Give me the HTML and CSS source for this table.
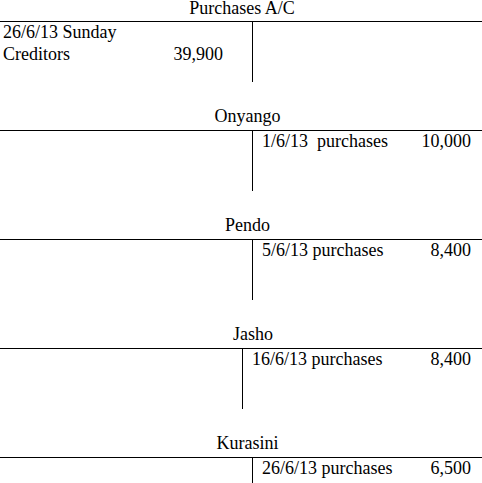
FILE: index.html
```html
<!DOCTYPE html>
<html lang="en">
<head>
<meta charset="utf-8">
<title>Ledger accounts</title>
<link rel="stylesheet" href="styles.css">
</head>
<body>
<section class="acct acct-first">
  <h2 class="acct-title title-main">Purchases A/C</h2>
  <div class="ledger">
    <div class="side side-dr">
      <div class="row">26/6/13 Sunday</div>
      <div class="row"><span>Creditors</span><span class="amt">39,900</span></div>
    </div>
    <div class="side side-cr"></div>
  </div>
</section>

<section class="acct">
  <h2 class="acct-title title-shift">Onyango</h2>
  <div class="ledger">
    <div class="side side-dr"></div>
    <div class="side side-cr">
      <div class="row"><span class="pre">1/6/13  purchases</span><span class="amt">10,000</span></div>
    </div>
  </div>
</section>

<section class="acct">
  <h2 class="acct-title title-shift">Pendo</h2>
  <div class="ledger">
    <div class="side side-dr"></div>
    <div class="side side-cr">
      <div class="row"><span>5/6/13 purchases</span><span class="amt">8,400</span></div>
    </div>
  </div>
</section>

<section class="acct">
  <h2 class="acct-title title-wide">Jasho</h2>
  <div class="ledger ledger-narrow">
    <div class="side side-dr"></div>
    <div class="side side-cr">
      <div class="row"><span>16/6/13 purchases</span><span class="amt">8,400</span></div>
    </div>
  </div>
</section>

<section class="acct">
  <h2 class="acct-title title-shift">Kurasini</h2>
  <div class="ledger">
    <div class="side side-dr"></div>
    <div class="side side-cr">
      <div class="row"><span>26/6/13 purchases</span><span class="amt">6,500</span></div>
    </div>
  </div>
</section>
</body>
</html>
```

FILE: styles.css
```css
html, body {
  margin: 0;
  padding: 0;
  background: #ffffff;
}

body {
  font-family: "Liberation Serif", "Times New Roman", serif;
  font-size: 18px;
  color: #000000;
  overflow: hidden;
}

.acct {
  margin-bottom: 26px;
}

.acct-title {
  margin: 0 0 6px;
  font-size: 18px;
  font-weight: normal;
  line-height: 16px;
  text-align: center;
}

.acct-first .acct-title {
  margin-bottom: 5px;
}

.title-main {
  padding-left: 2px;
}

.title-shift {
  padding-left: 13px;
}

.title-wide {
  padding-left: 24px;
}

.ledger {
  display: grid;
  grid-template-columns: 252px 1fr;
  height: 60px;
  border-top: 1px solid #000000;
}

.ledger-narrow {
  grid-template-columns: 242px 1fr;
}

.side {
  display: flex;
  flex-direction: column;
}

.side-dr {
  padding: 0 29px 0 3px;
}

.side-cr {
  border-left: 1px solid #000000;
  padding: 0 11px 0 9px;
}

.row {
  display: flex;
  justify-content: space-between;
  line-height: 22px;
}

.row:first-child {
  margin-top: -1px;
}

.pre {
  white-space: pre;
}
```
